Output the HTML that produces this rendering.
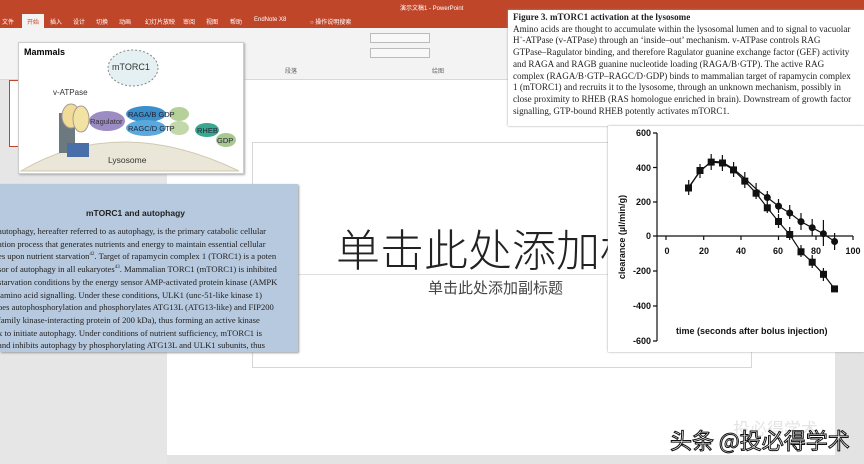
<!DOCTYPE html>
<html><head><meta charset="utf-8"><style>
*{margin:0;padding:0;box-sizing:border-box}
body{width:864px;height:464px;position:relative;overflow:hidden;background:#e3e3e3;font-family:"Liberation Sans","Noto Sans CJK SC",sans-serif}
.abs{position:absolute}
.tab{position:absolute;top:17px;font-size:6px;color:#fff}
.serif{font-family:"Liberation Serif","Noto Serif CJK SC",serif}
.ic{position:absolute;border:1px solid #bbb;background:#f8f8f8}
</style></head><body>
<div class="abs" style="left:0;top:0;width:864px;height:28px;background:#c0462a"></div>
<div class="abs" style="left:22px;top:14px;width:22px;height:14px;background:#f3f3f3"></div>
<span class="tab" style="left:2px">文件</span><span class="tab" style="left:27px;color:#c0462a">开始</span>
<span class="tab" style="left:50px">插入</span><span class="tab" style="left:73px">设计</span><span class="tab" style="left:96px">切换</span><span class="tab" style="left:119px">动画</span><span class="tab" style="left:145px">幻灯片放映</span><span class="tab" style="left:183px">审阅</span><span class="tab" style="left:206px">视图</span><span class="tab" style="left:230px">帮助</span><span class="tab" style="left:254px">EndNote X8</span><span class="tab" style="left:310px">○ 操作说明搜索</span>
<span class="abs" style="left:400px;top:3px;font-size:6px;color:#fff">演示文稿1 - PowerPoint</span>
<div class="abs" style="left:0;top:28px;width:864px;height:52px;background:#f3f3f3;border-bottom:1px solid #d8d8d8"></div>
<div class="ic" style="left:370px;top:33px;width:60px;height:10px"></div>
<div class="ic" style="left:370px;top:48px;width:60px;height:10px"></div>
<span class="abs" style="left:285px;top:66px;font-size:6px;color:#666">段落</span>
<span class="abs" style="left:432px;top:66px;font-size:6px;color:#666">绘图</span>
<div class="abs" style="left:0;top:80px;width:167px;height:384px;background:#e6e6e6"></div>
<div class="abs" style="left:9px;top:80px;width:150px;height:67px;border:1px solid #c0462a;background:#fff"></div>
<div class="abs" style="left:167px;top:80px;width:668px;height:375px;background:#fff"></div>
<div class="abs" style="left:252px;top:142px;width:500px;height:226px;border:1px solid #d6d6d6;background:#fff"></div>
<div class="abs" style="left:252px;top:274px;width:356px;border-top:1px solid #e0e0e0"></div>
<div class="abs" style="left:336px;top:215px;font-size:44px;color:#222;font-weight:300;white-space:nowrap;font-family:'Noto Sans CJK SC',sans-serif">单击此处添加标</div>
<div class="abs" style="left:428px;top:277px;font-size:15px;color:#444;font-family:'Noto Sans CJK SC',sans-serif">单击此处添加副标题</div>

<!-- Mammals figure -->
<div class="abs" style="left:18px;top:42px;width:226px;height:132px;background:#fff;border:1px solid #ccc;box-shadow:1px 1px 2px #aaa">
<svg width="226" height="132" viewBox="0 0 226 132" style="position:absolute;left:0;top:0">
<path d="M2 128 Q100 70 220 128 Z" fill="#ebe7d8" stroke="#cfc9b0"/>
<ellipse cx="114" cy="25" rx="25" ry="18" fill="#e4f0f2" stroke="#888" stroke-dasharray="2 2"/>
<rect x="40" y="70" width="16" height="40" fill="#6c7a80"/>
<ellipse cx="52" cy="73" rx="9" ry="12" fill="#f0dc96" stroke="#a99"/>
<ellipse cx="62" cy="76" rx="8" ry="13" fill="#f3e3a2" stroke="#a99"/>
<rect x="48" y="100" width="22" height="14" fill="#4a6ea8"/>
<ellipse cx="88" cy="78" rx="18" ry="10" fill="#9d8cc4"/>
<ellipse cx="127" cy="71" rx="20" ry="8" fill="#3b8fcb"/>
<ellipse cx="127" cy="85" rx="20" ry="8" fill="#5aa9de"/>
<ellipse cx="160" cy="71" rx="10" ry="7" fill="#b6d09a"/>
<ellipse cx="160" cy="85" rx="10" ry="7" fill="#c2d8a8"/>
<ellipse cx="188" cy="87" rx="12" ry="7" fill="#3aa88f"/>
<ellipse cx="207" cy="97" rx="10" ry="7" fill="#a8c890"/>
</svg>
<span class="abs" style="left:5px;top:4px;font-size:9px;font-weight:bold">Mammals</span>
<span class="abs" style="left:93px;top:19px;font-size:9px;color:#333">mTORC1</span>
<span class="abs" style="left:34px;top:45px;font-size:8px;color:#333">v-ATPase</span>
<span class="abs" style="left:71px;top:74px;font-size:7.5px;color:#333">Ragulator</span>
<span class="abs" style="left:109px;top:67px;font-size:7.5px;color:#223">RAGA/B GDP</span>
<span class="abs" style="left:109px;top:81px;font-size:7.5px;color:#223">RAGC/D GTP</span>
<span class="abs" style="left:178px;top:83px;font-size:7.5px;color:#223">RHEB</span>
<span class="abs" style="left:198px;top:93px;font-size:7.5px;color:#223">GDP</span>
<span class="abs" style="left:89px;top:112px;font-size:8.5px;color:#333">Lysosome</span>
</div>

<!-- blue text box -->
<div class="abs serif" style="left:0;top:184px;width:298px;height:168px;background:#b7c9de;box-shadow:1px 1px 2px #999;overflow:hidden;font-size:8.6px;line-height:12.7px;color:#222;white-space:nowrap">
<div style="position:absolute;left:86px;top:23px;font-family:'Liberation Sans',sans-serif;font-weight:bold;font-size:8.5px">mTORC1 and autophagy</div>
<div style="position:absolute;left:-2px;top:41px">
autophagy, hereafter referred to as autophagy, is the primary catabolic cellular<br>ation process that generates nutrients and energy to maintain essential cellular<br>es upon nutrient starvation<sup style="font-size:5px;line-height:0">42</sup>. Target of rapamycin complex 1 (TORC1) is a poten<br>sor of autophagy in all eukaryotes<sup style="font-size:5px;line-height:0">43</sup>. Mammalian TORC1 (mTORC1) is inhibited<br>starvation conditions by the energy sensor AMP-activated protein kinase (AMPK<br>&nbsp;amino acid signalling. Under these conditions, ULK1 (unc-51-like kinase 1)<br>oes autophosphorylation and phosphorylates ATG13L (ATG13-like) and FIP200<br>family kinase-interacting protein of 200 kDa), thus forming an active kinase<br>x to initiate autophagy. Under conditions of nutrient sufficiency, mTORC1 is<br>and inhibits autophagy by phosphorylating ATG13L and ULK1 subunits, thus</div>
</div>

<!-- caption box -->
<div class="abs serif" style="left:508px;top:10px;width:360px;height:116px;background:#fff;box-shadow:0 0 2px #999;font-size:9.1px;line-height:11.7px;color:#222;padding:2px 0 0 5px;white-space:nowrap">
<b>Figure 3. mTORC1 activation at the lysosome</b><br>Amino acids are thought to accumulate within the lysosomal lumen and to signal to vacuolar<br>H<sup style="font-size:5px;line-height:0">+</sup>-ATPase (v-ATPase) through an ‘inside–out’ mechanism. v-ATPase controls RAG<br>GTPase–Ragulator binding, and therefore Ragulator guanine exchange factor (GEF) activity<br>and RAGA and RAGB guanine nucleotide loading (RAGA/B·GTP). The active RAG<br>complex (RAGA/B·GTP–RAGC/D·GDP) binds to mammalian target of rapamycin complex<br>1 (mTORC1) and recruits it to the lysosome, through an unknown mechanism, possibly in<br>close proximity to RHEB (RAS homologue enriched in brain). Downstream of growth factor<br>signalling, GTP-bound RHEB potently activates mTORC1.
</div>

<!-- chart -->
<div class="abs" style="left:608px;top:126px;width:256px;height:226px;background:#fff;box-shadow:0 0 2px #999"></div>
<svg class="abs" style="left:0;top:0" width="864" height="464" font-family="Liberation Sans" font-weight="bold" font-size="9">
<g stroke="#111" stroke-width="1.2" fill="none">
<path d="M657 133V341M653 133h4M653 167.5h4M653 202h4M653 236h4M653 271h4M653 306h4M653 341h4"/>
<path d="M657 236H853M666 236v4M703.7 236v4M741 236v4M778.5 236v4M816 236v4M853 236v4"/>
<polyline points="688.7,188 700,170.7 711.2,162.1 722.4,163 733.6,169.9 744.8,181.1 756.1,193.2 767.3,207.8 778.5,221.6 789.7,234.6 801,251.8 812.2,262.2 823.4,274.3 834.6,288.9"/>
<polyline points="688.7,187.1 700,171.6 711.2,161.3 722.4,162.1 733.6,169 744.8,178.5 756.1,188.9 767.3,197.5 778.5,206.1 789.7,213 801,221.6 812.2,227.7 823.4,233.7 834.6,241.5"/>
<path d="M688.7 180v15M700 164v14M711.2 154v16M722.4 155v16M733.6 162v15M744.8 172v16M756.1 183v16M767.3 199v14M778.5 214v14M789.7 227v13M801 245v12M812.2 255v13M823.4 268v13M767.3 191v13M778.5 199v14M789.7 205v14M801 213v17M812.2 219v17M823.4 220v26M834.6 233v17"/>
</g>
<g fill="#111">
<rect x="685" y="184.5" width="7" height="7"/><rect x="696.5" y="167" width="7" height="7"/><rect x="707.7" y="158.6" width="7" height="7"/><rect x="719" y="159.5" width="7" height="7"/><rect x="730" y="166.4" width="7" height="7"/><rect x="741.3" y="177.6" width="7" height="7"/><rect x="752.6" y="189.7" width="7" height="7"/><rect x="763.8" y="204.3" width="7" height="7"/><rect x="775" y="218" width="7" height="7"/><rect x="786.2" y="231" width="7" height="7"/><rect x="797.5" y="248.3" width="7" height="7"/><rect x="808.7" y="258.7" width="7" height="7"/><rect x="820" y="270.8" width="7" height="7"/><rect x="831" y="285.4" width="7" height="7"/>
<circle cx="767.3" cy="197.5" r="3.5"/><circle cx="778.5" cy="206.1" r="3.5"/><circle cx="789.7" cy="213" r="3.5"/><circle cx="801" cy="221.6" r="3.5"/><circle cx="812.2" cy="227.7" r="3.5"/><circle cx="823.4" cy="233.7" r="3.5"/><circle cx="834.6" cy="241.5" r="3.5"/>
<g text-anchor="end"><text x="651" y="136">600</text><text x="651" y="171">400</text><text x="651" y="205">200</text><text x="651" y="239">0</text><text x="651" y="274">-200</text><text x="651" y="309">-400</text><text x="651" y="344">-600</text></g>
<g text-anchor="middle"><text x="667" y="254">0</text><text x="704" y="254">20</text><text x="741" y="254">40</text><text x="778" y="254">60</text><text x="816" y="254">80</text><text x="853" y="254">100</text></g>
<text x="676" y="334">time (seconds after bolus injection)</text>
<text transform="translate(625,237) rotate(-90)" text-anchor="middle">clearance (µl/min/g)</text>
</g>
</svg>

<div class="abs" style="left:733px;top:415px;font-size:17px;color:#e4e4e4;font-family:'Noto Sans CJK SC',sans-serif;white-space:nowrap">投必得学术</div>
<div class="abs" style="left:670px;top:424px;font-size:22px;color:#fff;font-family:'Noto Sans CJK SC',sans-serif;-webkit-text-stroke:1px #111;white-space:nowrap">头条 @投必得学术</div>
</body></html>
